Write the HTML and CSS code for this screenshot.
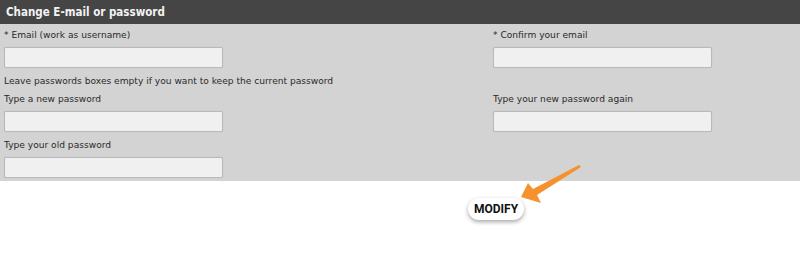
FILE: index.html
```html
<!DOCTYPE html>
<html lang="en">
<head>
    <meta charset="UTF-8">
    <title>Change E-mail or password</title>
    <link rel="stylesheet" href="styles.css">
</head>
<body>
    <div class="account-box">
        <div class="box-title">Change E-mail or password</div>
        <div class="box-body">
            <div class="field">
                <label>* Email (work as username)</label>
                <input type="text" class="txt">
            </div>
            <div class="field">
                <label>* Confirm your email</label>
                <input type="text" class="txt">
            </div>
            <div class="note">Leave passwords boxes empty if you want to keep the current password</div>
            <div class="field after-note">
                <label>Type a new password</label>
                <input type="password" class="txt">
            </div>
            <div class="field after-note">
                <label>Type your new password again</label>
                <input type="password" class="txt">
            </div>
            <div class="field">
                <label>Type your old password</label>
                <input type="password" class="txt">
            </div>
        </div>
    </div>
    <div class="actions">
        <button class="btn-modify">MODIFY</button>
    </div>
    <svg class="hint-arrow" width="800" height="261" viewBox="0 0 800 261">
        <defs>
            <filter id="soft" x="-20%" y="-20%" width="140%" height="140%">
                <feGaussianBlur stdDeviation="0.4"/>
            </filter>
        </defs>
        <polygon points="521,197 528,183 533,189 579,165 581,167 537,195 541,203" fill="#f5922f" filter="url(#soft)"/>
    </svg>
</body>
</html>
```

FILE: styles.css
```css
* { margin: 0; padding: 0; box-sizing: border-box; }
body {
    font-family: "DejaVu Sans", Verdana, sans-serif;
    background: #fff;
    width: 800px;
    height: 261px;
    position: relative;
    overflow: hidden;
}
.account-box { background: #d3d3d3; }
.box-title {
    background: #454545;
    color: #f2f2f2;
    font-family: "DejaVu Sans Condensed", "DejaVu Sans", sans-serif;
    font-weight: bold;
    font-size: 11.5px;
    height: 24px;
    line-height: 24px;
    padding-left: 6px;
}
.box-body {
    display: grid;
    grid-template-columns: 489px 1fr;
    padding: 4px 0 3px 4px;
}
.field { display: flex; flex-direction: column; margin-top: 6px; }
.field:nth-child(1), .field:nth-child(2) { margin-top: 0; }
.field.after-note { margin-top: 4px; }
.field label {
    font-size: 9.1px;
    line-height: 14px;
    color: #2a2a2a;
    margin-bottom: 5px;
}
.note {
    grid-column: 1 / span 2;
    font-size: 9.1px;
    line-height: 14px;
    color: #2a2a2a;
    margin-top: 6px;
}
.txt {
    width: 219px;
    height: 21px;
    background: #f0f0f0;
    border: 1px solid #b9b9b9;
    border-radius: 2px;
    box-shadow: 0 0 1px rgba(0,0,0,0.15);
    outline: none;
}
.actions { padding: 17px 0 0 468px; }
.btn-modify {
    height: 22px;
    padding: 0 6px;
    background: #fff;
    border: none;
    border-radius: 11px;
    font-family: Roboto, "Liberation Sans", sans-serif;
    font-weight: bold;
    font-size: 12px;
    color: #111;
    box-shadow: 0 2px 4px rgba(0,0,0,0.35);
}
.hint-arrow { position: absolute; top: 0; left: 0; pointer-events: none; }
```
